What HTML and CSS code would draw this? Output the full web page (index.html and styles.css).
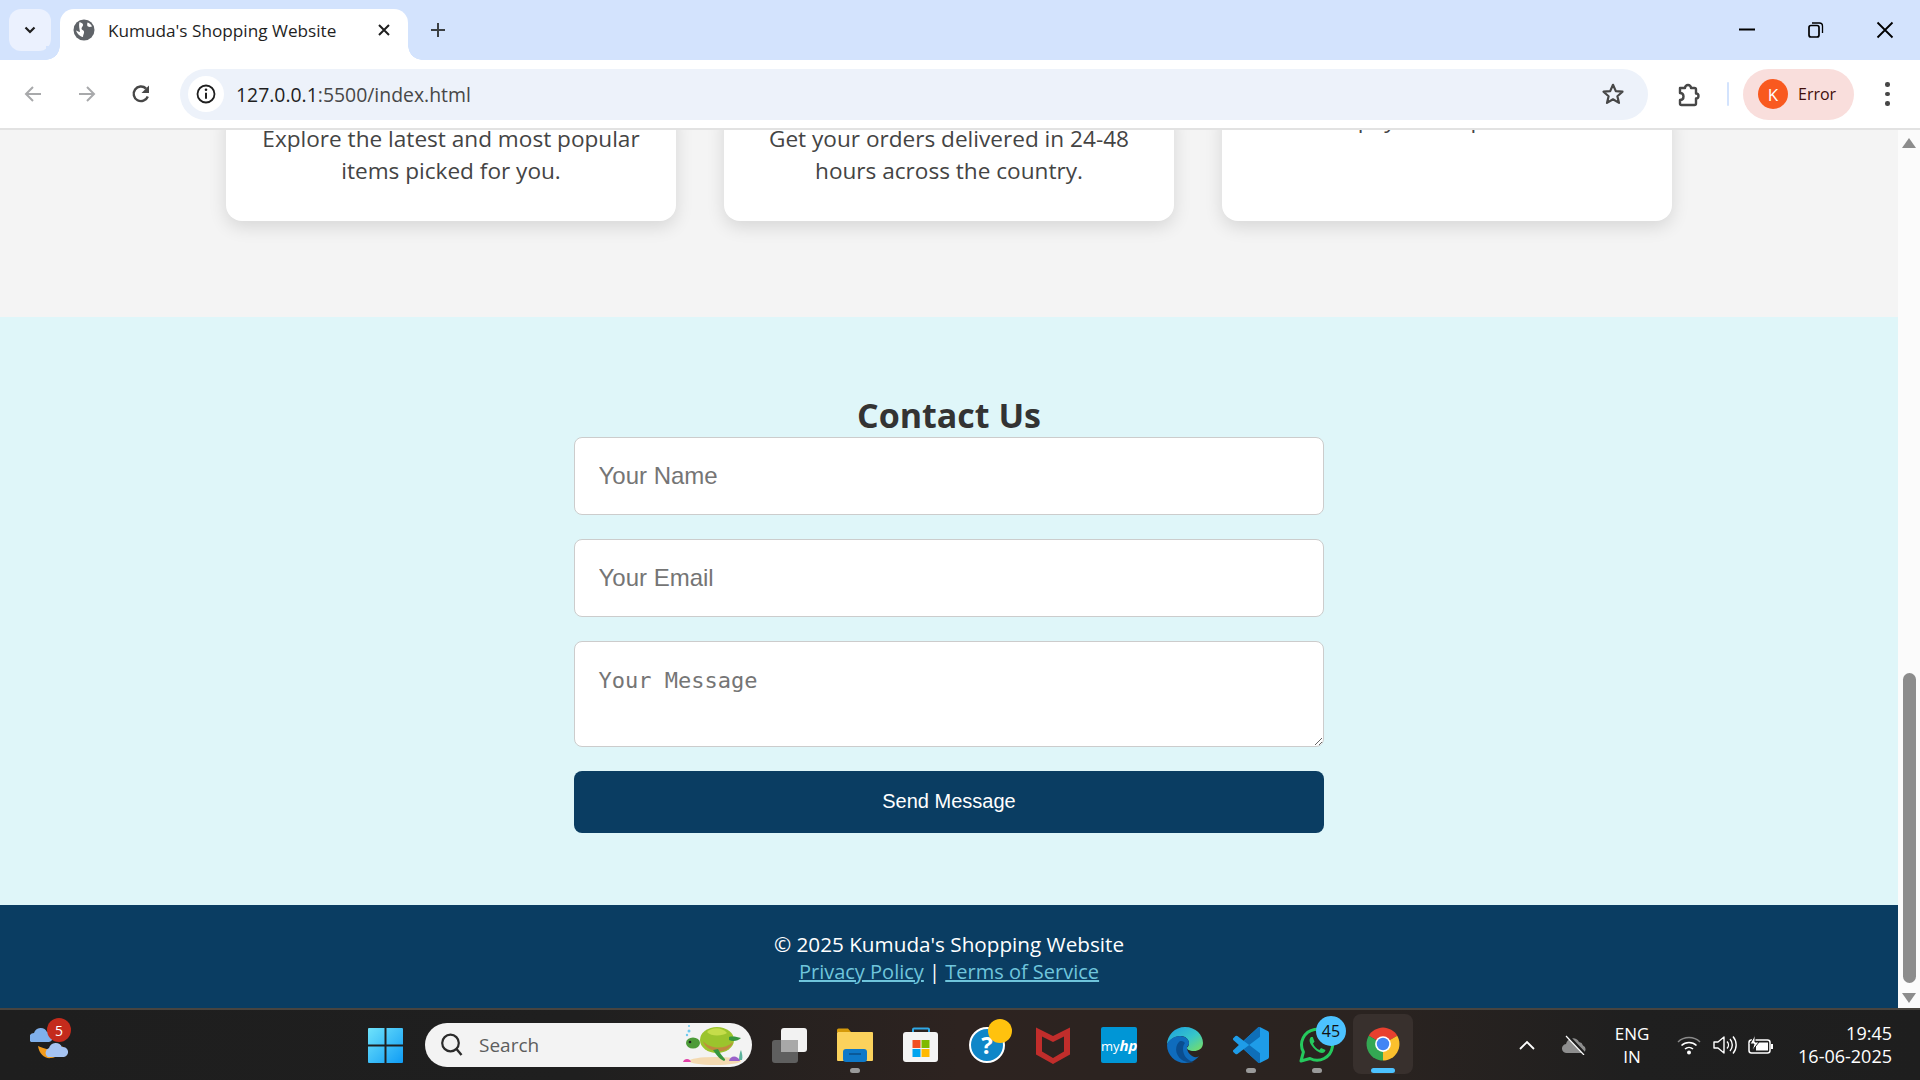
FILE: index.html
```html
<!DOCTYPE html>
<html lang="en">
<head>
<meta charset="utf-8">
<title>Kumuda's Shopping Website</title>
<link rel="stylesheet" href="styles.css">
</head>
<body>
<div class="shell">
  <header class="tabstrip">
    <button class="tab-search"><svg width="14" height="14" viewBox="0 0 14 14"><path d="M2.5 4.5 7 9l4.5-4.5" fill="none" stroke="#1f1f1f" stroke-width="2.2"/></svg></button>
    <div class="tab">
      <svg class="favicon" width="22" height="22" viewBox="0 0 22 22"><circle cx="11" cy="11" r="10.5" fill="#5f6368"/><path d="M6.500 3c1.500.5 3 1 3.500 2.500S8.500 8 8.500 9.500s2 1.500 2.500 3-1 3-1 5.500c-3-.5-6-3.500-7-6.500 2 .5 2.500 1.500 4 1.500C6.500 10 5.500 6 6.500 3zM14.500 3.500c2 .5 3.500 2 4.500 4-1.500.5-3 .5-4 0s-1-2.500-.5-4z" fill="#fff"/></svg>
      <span class="tab-title">Kumuda's Shopping Website</span>
      <svg class="tab-close" width="14" height="14" viewBox="0 0 14 14"><path d="m2 2 10 10M12 2 2 12" stroke="#1f1f1f" stroke-width="2"/></svg>
    </div>
    <svg class="new-tab" width="18" height="18" viewBox="0 0 18 18"><path d="M9 2v14M2 9h14" stroke="#3c4043" stroke-width="2"/></svg>
    <div class="window-controls">
      <svg width="16" height="16" viewBox="0 0 16 16"><path d="M0 7.500h16" stroke="#000" stroke-width="2"/></svg>
      <svg width="16" height="16" viewBox="0 0 16 16"><rect x="1" y="3.500" width="10" height="11.500" rx="2" fill="none" stroke="#000" stroke-width="1.700"/><path d="M4 1h7.500a3 3 0 0 1 3 3v7" fill="none" stroke="#000" stroke-width="1.300"/></svg>
      <svg width="18" height="18" viewBox="0 0 18 18"><path d="m1.500 1.500 15 15M16.500 1.500l-15 15" stroke="#000" stroke-width="1.800"/></svg>
    </div>
  </header>

  <nav class="toolbar">
    <svg class="nav-icon nav-back" width="20" height="20" viewBox="0 0 20 20"><path d="M18 10H3M10 3l-7 7 7 7" fill="none" stroke="#a8a9ab" stroke-width="2"/></svg>
    <svg class="nav-icon nav-fwd" width="20" height="20" viewBox="0 0 20 20"><path d="M2 10h15M10 3l7 7-7 7" fill="none" stroke="#a8a9ab" stroke-width="2"/></svg>
    <svg class="nav-icon nav-reload" width="20" height="20" viewBox="0 0 20 20"><path d="M16.800 12.500A7.300 7.300 0 1 1 15 4.500" fill="none" stroke="#474747" stroke-width="2.400"/><path d="M18 1.500v7.500h-7.500z" fill="#474747"/></svg>
    <div class="omnibox">
      <span class="info-chip"><svg width="20" height="20" viewBox="0 0 20 20"><circle cx="10" cy="10" r="8.500" fill="none" stroke="#1f1f1f" stroke-width="1.800"/><path d="M10 8.800v6" stroke="#1f1f1f" stroke-width="2"/><circle cx="10" cy="5.800" r="1.300" fill="#1f1f1f"/></svg></span>
      <span class="url"><span class="url-host">127.0.0.1</span>:5500/index.html</span>
      <svg class="star" width="24" height="24" viewBox="0 0 24 24"><path d="m12 2.800 2.800 6.300 6.700.6-5.100 4.500 1.600 6.700L12 17.300l-6 3.600 1.600-6.700-5.100-4.500 6.700-.6z" fill="none" stroke="#474747" stroke-width="2.200" stroke-linejoin="round"/></svg>
    </div>
    <svg class="ext-icon" width="26" height="26" viewBox="0 0 26 26"><path d="M5 7h5a3 3 0 0 1 6 0h3.500A1.500 1.500 0 0 1 21 8.500v4a2.500 2.500 0 0 1 0 5v5a1.500 1.500 0 0 1-1.500 1.500h-13A1.500 1.500 0 0 1 5 22.500V19c2.500 0 3.500-1.500 3.500-3.500S7.500 12 5 12z" fill="none" stroke="#474747" stroke-width="2.400" stroke-linejoin="round"/></svg>
    <span class="tool-sep"></span>
    <div class="profile"><span class="avatar">K</span><span class="profile-label">Error</span></div>
    <div class="kebab"><i></i><i></i><i></i></div>
  </nav>

  <div class="viewport">
    <main class="page">
      <section class="features">
        <div class="feature-grid">
          <article class="card"><p>Explore the latest and most popular items picked for you.</p></article>
          <article class="card"><p>Get your orders delivered in 24-48 hours across the country.</p></article>
          <article class="card card-raised"><p>payment options</p></article>
        </div>
      </section>
      <section class="contact">
        <h2>Contact Us</h2>
        <form class="contact-form">
          <input class="field" type="text" placeholder="Your Name">
          <input class="field" type="email" placeholder="Your Email">
          <textarea class="field field-area" placeholder="Your Message"></textarea>
          <button class="send" type="button">Send Message</button>
        </form>
      </section>
      <footer class="site-footer">
        <div>© 2025 Kumuda's Shopping Website</div>
        <div class="footer-links"><a href="#">Privacy Policy</a> | <a href="#">Terms of Service</a></div>
      </footer>
    </main>
    <aside class="scrollbar">
      <span class="arrow-up"></span>
      <span class="thumb"></span>
      <span class="arrow-down"></span>
    </aside>
  </div>

  <div class="taskbar">
    <div class="weather">
      <svg width="42" height="44" viewBox="0 0 42 44">
        <path d="M8 28c1 8 7 13 13 12 6-.5 10-5 12-12-4 4-9 5-13 4-5-1-9-3-12-4z" fill="#f29b1d"/>
        <path d="M1 24a5 5 0 0 1 3-9 7 7 0 0 1 13-1 5 5 0 0 1 2 10z" fill="#7fb0ec"/>
        <path d="M18 39a5 5 0 0 1 1-9 7 7 0 0 1 13-1 5 5 0 0 1 2 10z" fill="#a5c3f2"/>
      </svg>
      <span class="weather-badge">5</span>
    </div>
    <svg class="start" width="35" height="35" viewBox="0 0 35 35">
      <defs><linearGradient id="win" x1="0" y1="0" x2="1" y2="1"><stop offset="0" stop-color="#6fe3fb"/><stop offset="1" stop-color="#0f9cf5"/></linearGradient></defs>
      <path d="M1 0h15.500v16.500H0V1a1 1 0 0 1 1-1zM18.500 0H34a1 1 0 0 1 1 1v15.500H18.500zM0 18.500h16.500V35H1a1 1 0 0 1-1-1zM18.500 18.500H35V34a1 1 0 0 1-1 1H18.500z" fill="url(#win)"/>
    </svg>
    <div class="search">
      <svg width="24" height="26" viewBox="0 0 24 26"><circle cx="10.500" cy="11" r="8.300" fill="none" stroke="#2b2b2b" stroke-width="2.200"/><path d="m16.500 17 5 6" stroke="#2b2b2b" stroke-width="2.400"/></svg>
      <span class="search-label">Search</span>
      <svg class="turtle" width="68" height="44" viewBox="0 0 68 44">
        <ellipse cx="36" cy="38" rx="26" ry="4" fill="#f3d9b0"/>
        <path d="M28 22 22 17c3-2 10-2 12 2z" fill="#3d9c3a"/>
        <ellipse cx="38" cy="17" rx="17" ry="13" fill="#9bc42d"/>
        <path d="M28 9c5-5 15-5 20 1-4 3-16 4-20-1z" fill="#c5dd4a"/>
        <path d="M24 18c6 8 22 9 30 1-2 6-8 10-16 9-7-.5-12-4-14-10z" fill="#c08a3e"/>
        <ellipse cx="14" cy="20" rx="7" ry="5.500" fill="#4d9b39"/>
        <circle cx="11" cy="19" r="1.300" fill="#222"/>
        <path d="M34 27c3 4 6 9 11 11 2-1 1-2 0-3-3-3-5-7-6-9z" fill="#37963e"/>
        <path d="M50 14c4-1 8 0 12 1-3 3-8 4-12 2z" fill="#37963e"/>
        <path d="M4 39c1-4 7-4 8 0z" fill="#e23fa6"/>
        <path d="M50 38c1-6 9-6 11 0z" fill="#9a62c9"/>
        <path d="M60 37c0-4 1-8 2-10 1 3 2 7 1 10z" fill="#5bb29c"/>
        <circle cx="10" cy="8" r="1.500" fill="#6dc8ee"/><circle cx="8" cy="12" r="1.200" fill="#6dc8ee"/><circle cx="10" cy="3" r="1" fill="#6dc8ee"/>
      </svg>
    </div>
    <div class="apps">
      <div class="app"><svg width="36" height="36" viewBox="0 0 36 36"><rect x="1" y="13" width="26" height="23" rx="3" fill="#5f5f5f"/><rect x="10" y="1" width="26" height="24" rx="3" fill="#f2f2f2"/><rect x="10" y="13" width="17" height="12" fill="#a8a8a8"/></svg></div>
      <div class="app has-dot"><svg width="36" height="36" viewBox="0 0 36 36"><path d="M0 3a1.500 1.500 0 0 1 1.500-1.500H11l3 3.500h-14z" fill="#d59a0b"/><rect y="5" width="36" height="29" rx="1" fill="#fbd25c"/><rect x="6" y="22" width="24" height="13" rx="3" fill="#0e78c8"/><path d="M12 27h12" stroke="#0a4f8a" stroke-width="1.500"/></svg><i class="dot"></i></div>
      <div class="app"><svg width="36" height="36" viewBox="0 0 36 36"><path d="M10 7V2.500a1 1 0 0 1 1-1h14a1 1 0 0 1 1 1V7" fill="none" stroke="#2fa8e6" stroke-width="2"/><rect y="5" width="35" height="30" rx="3" fill="#f4f4f4"/><rect x="9.500" y="13" width="8" height="8" fill="#f25022"/><rect x="18.500" y="13" width="8" height="8" fill="#7fba00"/><rect x="9.500" y="22" width="8" height="8" fill="#00a4ef"/><rect x="18.500" y="22" width="8" height="8" fill="#ffb900"/></svg></div>
      <div class="app help"><span class="help-ring">?</span><i class="help-dot"></i></div>
      <div class="app"><svg width="34" height="38" viewBox="0 0 34 38"><path d="M0 1.500 17 10 34 1.500V28.500L17 38 0 28.500zM6 10.500v15l11 6.500 11-6.500v-15L17 16z" fill="#c12d2b"/></svg></div>
      <div class="app"><span class="myhp">my<b>hp</b></span></div>
      <div class="app"><svg width="36" height="36" viewBox="0 0 36 36"><defs><linearGradient id="edge" x1="0" y1="0" x2="1" y2="1"><stop offset="0" stop-color="#1b9de2"/><stop offset=".55" stop-color="#37c6c9"/><stop offset="1" stop-color="#7ee05c"/></linearGradient></defs><path d="M18 0c11 0 18 8 18 16 0 6-5 8-9 8-5 0-7-2-7-3 0-1 2-1 2-5 0-3-3-7-8-7C7 9 1 14 0 18 0 8 8 0 18 0z" fill="url(#edge)"/><path d="M0 18c1-5 7-9 13-9 5 0 9 3 9 7 0 3-2 3-2 5 0 5 7 12 12 8-3 4-8 7-14 7C8 36 0 28 0 18z" fill="#0f6cbd"/><path d="M13 14c-5 4-6 13 2 19 3 2 8 3 12 2-6-1-11-6-11-13 0-3 1-5 2-6-2-2-3-2-5-2z" fill="#0a4d8f"/></svg></div>
      <div class="app has-dot"><svg width="36" height="36" viewBox="0 0 100 100"><path d="M70.900 99.300a6.200 6.200 0 0 0 5-.2l20.600-9.900a6.200 6.200 0 0 0 3.500-5.600V16.400a6.200 6.200 0 0 0-3.500-5.600L75.900.9a6.200 6.200 0 0 0-7.100 1.200L29.400 38.100 12.200 25.100a4.200 4.200 0 0 0-5.300.2l-5.500 5a4.200 4.200 0 0 0 0 6.200L16.300 50 1.400 63.600a4.200 4.200 0 0 0 0 6.200l5.500 5a4.200 4.200 0 0 0 5.300.2l17.200-13 39.500 36a6.200 6.200 0 0 0 2 1.300zM75 27.300 45 50l30 22.700z" fill="#1e9ce8"/><path d="M75 0v27.300L45 50 29.400 38.100 68.800 2.100A6.200 6.200 0 0 1 75 0z" fill="#0f6fb8"/><path d="M75 100V72.700L45 50 29.400 61.900l39.400 36a6.200 6.200 0 0 0 6.200 2.100z" fill="#0f6fb8"/></svg><i class="dot"></i></div>
      <div class="app has-dot whatsapp"><svg width="36" height="36" viewBox="0 0 36 36"><path d="M2 34l2.400-9A15.500 15.500 0 1 1 11 31.500z" fill="none" stroke="#25c95d" stroke-width="3" stroke-linejoin="round"/><path d="M12 10c-2 2-2 5 1 9s7 7 10 7c2 0 3-1 3.500-3l-4.500-2-1.500 2c-3-1-5-3.500-6.500-6.500l1.500-1.800L13.800 10z" fill="#25c95d"/></svg><span class="wa-badge">45</span><i class="dot"></i></div>
      <div class="app app-active"><svg width="36" height="36" viewBox="0 0 48 48"><path d="M24 24 5 13A22 22 0 0 1 43 13z" fill="#e8402f"/><path d="M24 24 5 13A22 22 0 0 0 24 46z" fill="#34a853"/><path d="M24 24 43 13A22 22 0 0 1 24 46z" fill="#fbc02d"/><circle cx="24" cy="24" r="10.500" fill="#fff"/><circle cx="24" cy="24" r="8.300" fill="#4285f4"/></svg><i class="dot dot-active"></i></div>
    </div>
    <div class="tray">
      <svg class="tray-caret" width="16" height="10" viewBox="0 0 16 10"><path d="m1 9 7-7 7 7" fill="none" stroke="#fff" stroke-width="1.800"/></svg>
      <svg class="tray-cloud" width="26" height="20" viewBox="0 0 26 20"><path d="M5 18a4.500 4.500 0 0 1-1-9 7 7 0 0 1 13-2 5 5 0 0 1 4 3.500 4 4 0 0 1 0 7.500z" fill="#8e8e8e"/><path d="m5 0 18 19" stroke="#1f1f1f" stroke-width="3"/><path d="m4 1 18 19" stroke="#fff" stroke-width="1.200"/></svg>
      <div class="tray-lang"><span>ENG</span><span>IN</span></div>
      <svg class="tray-wifi" width="24" height="20" viewBox="0 0 24 20"><path d="M1 7a16 16 0 0 1 22 0" fill="none" stroke="#8a8a8a" stroke-width="1.500"/><path d="M4.500 10.500a11 11 0 0 1 15 0M8 14a6 6 0 0 1 8 0" fill="none" stroke="#fff" stroke-width="1.600"/><circle cx="12" cy="17.500" r="2" fill="#fff"/></svg>
      <svg class="tray-vol" width="24" height="20" viewBox="0 0 24 20"><path d="M1 7h4l6-5v16l-6-5H1z" fill="none" stroke="#fff" stroke-width="1.400" stroke-linejoin="round"/><path d="M14 6.500a5 5 0 0 1 0 7M17 4a9 9 0 0 1 0 12M20 1.500a13 13 0 0 1 0 17" fill="none" stroke="#fff" stroke-width="1.400"/></svg>
      <svg class="tray-bat" width="26" height="20" viewBox="0 0 26 20"><rect x="1" y="5" width="21" height="13" rx="2.500" fill="none" stroke="#fff" stroke-width="1.500"/><rect x="8" y="7.500" width="12" height="8" fill="#fff"/><rect x="23" y="9" width="2" height="5" fill="#fff"/><path d="M7 0 2 9h4l-2 7 7-9H7z" fill="#fff" stroke="#1f1f1f"/></svg>
      <div class="tray-clock"><span>19:45</span><span>16-06-2025</span></div>
    </div>
  </div>
</div>
</body>
</html>
```
FILE: styles.css
```css
* { box-sizing: border-box; }
html, body { margin: 0; height: 100%; overflow: hidden; }
body { font-family: "Open Sans", "Noto Sans", sans-serif; background: #fff; }
.shell { width: 1920px; height: 1080px; display: flex; flex-direction: column; }

/* Tab strip */
.tabstrip { height: 60px; flex: none; background: #d3e3fd; display: flex; align-items: flex-start; padding: 9px 0 0 9px; }
.tab-search { width: 42px; height: 42px; border: 0; border-radius: 12px; background: #ebf1fe; display: flex; align-items: center; justify-content: center; padding: 0; }
.tab { position: relative; width: 348px; height: 51px; margin-left: 9px; background: #fff; border-radius: 14px 14px 0 0; display: flex; align-items: center; padding: 0 17px 9px 13px; }
.tab::before, .tab::after { content: ""; position: absolute; bottom: 0; width: 14px; height: 14px; background: radial-gradient(circle at 0 0, #d3e3fd 13.500px, #fff 14px); }
.tab::before { left: -14px; }
.tab::after { right: -14px; background: radial-gradient(circle at 100% 0, #d3e3fd 13.500px, #fff 14px); }
.tab-title { margin-left: 13px; font-size: 17.200px; color: #1f1f1f; flex: 1; white-space: nowrap; }
.new-tab { margin: 12px 0 0 21px; }
.window-controls { margin-left: auto; width: 181px; display: flex; align-items: center; justify-content: space-between; padding: 12px 26px 0 0; }

/* Toolbar */
.toolbar { height: 70px; flex: none; background: #fff; border-bottom: 2px solid #e2e2e2; border-radius: 14px 14px 0 0; display: flex; align-items: center; position: relative; z-index: 1; }
.nav-icon { flex: none; }
.nav-back { margin-left: 23px; }
.nav-fwd { margin-left: 34px; }
.nav-reload { margin-left: 34px; }
.omnibox { width: 1468px; height: 51px; margin-left: 29px; background: #edf2fa; border-radius: 26px; display: flex; align-items: center; padding: 0 23px 0 8px; }
.info-chip { width: 36px; height: 36px; border-radius: 50%; background: #fff; display: flex; align-items: center; justify-content: center; flex: none; }
.url { margin-left: 12px; font-size: 19.400px; color: #474747; flex: 1; }
.url-host { color: #1f1f1f; }
.ext-icon { margin-left: 27px; }
.tool-sep { width: 2px; height: 24px; background: #d3e3fd; margin-left: 26px; border-radius: 1px; }
.profile { width: 111px; height: 51px; margin-left: 14px; background: #f9dedc; border-radius: 26px; display: flex; align-items: center; padding-left: 15px; }
.avatar { width: 30px; height: 30px; border-radius: 50%; background: #f9591f; color: #fff; font-size: 17px; display: flex; align-items: center; justify-content: center; }
.profile-label { margin-left: 10px; font-size: 16px; color: #410e0b; }
.kebab { margin-left: 31px; display: flex; flex-direction: column; gap: 5px; }
.kebab i { width: 4.500px; height: 4.500px; border-radius: 50%; background: #474747; display: block; }

/* Page viewport */
.viewport { flex: 1; min-height: 0; display: flex; }
.page { flex: 1; min-width: 0; display: flex; flex-direction: column; overflow: hidden; }
.features { height: 187px; flex: none; background: #f4f4f4; display: flex; flex-direction: column; justify-content: flex-end; padding-bottom: 96px; }
.feature-grid { width: 1446px; margin: 0 auto; display: grid; grid-template-columns: repeat(3, 450px); gap: 48px; }
.card { background: #fff; border-radius: 16px; box-shadow: 0 6px 18px rgba(0, 0, 0, .12); padding: 0 30px 34px; text-align: center; display: flex; flex-direction: column; justify-content: flex-end; color: #444; font-size: 22.600px; line-height: 32px; }
.card p { margin: 0; }
.card-raised { padding-bottom: 85px; }

.contact { height: 588px; flex: none; background: #dff6f9; padding-top: 78px; }
.contact h2 { margin: 0; height: 42px; text-align: center; font-size: 34px; line-height: 41px; font-weight: 700; color: #333; }
.contact-form { width: 750px; margin: 0 auto; display: flex; flex-direction: column; gap: 24px; }
.field { display: block; width: 100%; height: 78px; padding: 0 23.500px; background: #fff; border: 1.500px solid #ccc; border-radius: 8px; font-family: "Liberation Sans", Arial, sans-serif; font-size: 24px; outline: 0; }
.field::placeholder { color: #757575; opacity: 1; }
.field-area { height: 106px; padding: 26px 23.500px 0; font-family: "DejaVu Sans Mono", "Liberation Mono", monospace; font-size: 22px; line-height: 26px; resize: vertical; }
.send { height: 62px; border: 0; border-radius: 8px; background: #0a3d62; color: #fff; font-family: "Liberation Sans", Arial, sans-serif; font-size: 20px; padding: 0 0 2px; }

.site-footer { flex: 1; background: #0a3d62; color: #fff; text-align: center; font-size: 20.700px; line-height: 28px; padding-top: 25px; }
.footer-links { font-size: 20px; }
.site-footer a { color: #6fc5dc; }

/* Scrollbar */
.scrollbar { width: 22px; flex: none; background: #fbfbfb; display: flex; flex-direction: column; align-items: center; padding: 8px 0 5px; }
.arrow-up { width: 0; height: 0; border: 7.500px solid transparent; border-top: 0; border-bottom: 10px solid #8c8c8c; }
.thumb { width: 13px; height: 310px; margin-top: auto; border-radius: 7px; background: #8c8c8c; }
.arrow-down { width: 0; height: 0; margin-top: 10px; border: 7.500px solid transparent; border-bottom: 0; border-top: 10px solid #8c8c8c; }

/* Taskbar */
.taskbar { height: 72px; flex: none; border-top: 2px solid #48443f; background: linear-gradient(90deg, #1e1e1e 0, #1f1f1f 30%, #2d2320 50%, #2a2320 72%, #1f1f1f 85%, #1e1e1e 100%); display: flex; align-items: center; color: #fff; padding-left: 30px; }
.weather { position: relative; width: 42px; height: 44px; flex: none; margin-top: -10px; }
.weather-badge { position: absolute; left: 17px; top: 0; width: 24px; height: 24px; border-radius: 50%; background: #c42b1c; font-size: 14px; display: flex; align-items: center; justify-content: center; }
.start { margin-left: 296px; flex: none; }
.search { width: 327px; height: 44px; margin-left: 22px; border-radius: 22px; background: #f3f3f3; display: flex; align-items: center; padding: 0 5px 0 15px; flex: none; }
.search-label { margin-left: 15px; font-size: 19px; color: #5d5d5d; flex: 1; }
.apps { display: flex; margin-left: 4px; flex: none; }
.app { position: relative; width: 66px; height: 70px; display: flex; align-items: center; justify-content: center; }
.dot { position: absolute; bottom: 7px; left: 50%; width: 10px; height: 5px; margin-left: -5px; border-radius: 3px; background: #9a9a9a; }
.app-active { background: #38302d; border-radius: 8px; width: 60px; height: 60px; margin: 4px 0 0 3px; }
.dot-active { width: 24px; margin-left: -12px; bottom: 1px; background: #4cc2ff; }
.help-ring { width: 36px; height: 36px; border-radius: 50%; background: #0f86c8; border: 2px solid #fff; color: #fff; font-weight: 700; font-size: 24px; line-height: 32px; text-align: center; }
.help-dot { position: absolute; left: 34px; top: 9px; width: 24px; height: 24px; border-radius: 50%; background: #ffc20e; }
.myhp { width: 36px; height: 36px; background: #0096d6; border-radius: 2px; color: #fff; font-size: 13px; line-height: 36px; text-align: center; }
.myhp b { font-style: italic; font-size: 15px; }
.wa-badge { position: absolute; left: 32px; top: 6px; width: 30px; height: 30px; border-radius: 50%; background: #4cc2ff; color: #111; font-size: 16px; display: flex; align-items: center; justify-content: center; }
.tray { display: flex; align-items: center; margin-left: auto; padding-right: 28px; flex: none; }
.tray-caret { margin-right: 27px; }
.tray-cloud { margin-right: 22px; }
.tray-lang { width: 44px; display: flex; flex-direction: column; align-items: center; font-size: 17px; line-height: 23px; margin-right: 23px; }
.tray-wifi { margin-right: 12px; }
.tray-vol { margin-right: 11px; }
.tray-clock { width: 118px; display: flex; flex-direction: column; align-items: flex-end; font-size: 18px; line-height: 23px; }
```
